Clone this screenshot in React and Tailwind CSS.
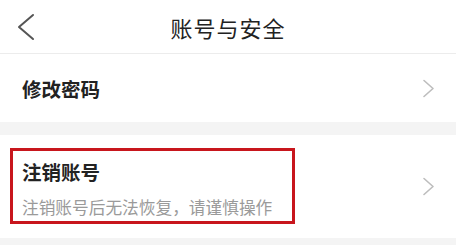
export default function App() {
  return (
    <div className="w-[456px] h-[245px] bg-[#f4f4f4] overflow-hidden font-['Noto_Sans_CJK_SC',sans-serif]">
      <div className="h-[54px] bg-white border-b border-[#ececec] grid grid-cols-[60px_1fr_60px] items-center">
        <div className="pl-[16px] flex items-center">
          <svg width="20" height="28" viewBox="0 0 20 28" fill="none">
            <path d="M17 2 L3 14 L17 26" stroke="#555" strokeWidth="2" strokeLinecap="round" strokeLinejoin="round" />
          </svg>
        </div>
        <div className="text-center text-[22px] leading-[30px] text-[#222] tracking-[1px]">账号与安全</div>
        <div />
      </div>
      <div className="h-[68px] bg-white flex items-center justify-between pl-[22px] pr-[21px]">
        <span className="text-[19.5px] leading-[28px] font-bold text-[#222] mt-[2px]">修改密码</span>
        <svg width="13" height="19" viewBox="0 0 13 19" fill="none">
          <path d="M2 1.5 L11 9.5 L2 17.5" stroke="#bdbdbd" strokeWidth="1.6" strokeLinecap="round" strokeLinejoin="round" />
        </svg>
      </div>
      <div className="h-[13px]" />
      <div className="relative h-[103px] bg-white flex items-center justify-between pl-[22px] pr-[21px]">
        <div className="flex flex-col gap-[9px] mt-[3px]">
          <span className="text-[19.5px] leading-[28px] font-bold text-[#222]">注销账号</span>
          <span className="text-[16.7px] leading-[24px] text-[#9a9a9a]">注销账号后无法恢复，请谨慎操作</span>
        </div>
        <svg width="13" height="19" viewBox="0 0 13 19" fill="none">
          <path d="M2 1.5 L11 9.5 L2 17.5" stroke="#bdbdbd" strokeWidth="1.6" strokeLinecap="round" strokeLinejoin="round" />
        </svg>
        <div className="absolute left-[10px] top-[13px] w-[285px] h-[76px] border-[3px] border-[#c8161d] pointer-events-none" />
      </div>
    </div>
  );
}
